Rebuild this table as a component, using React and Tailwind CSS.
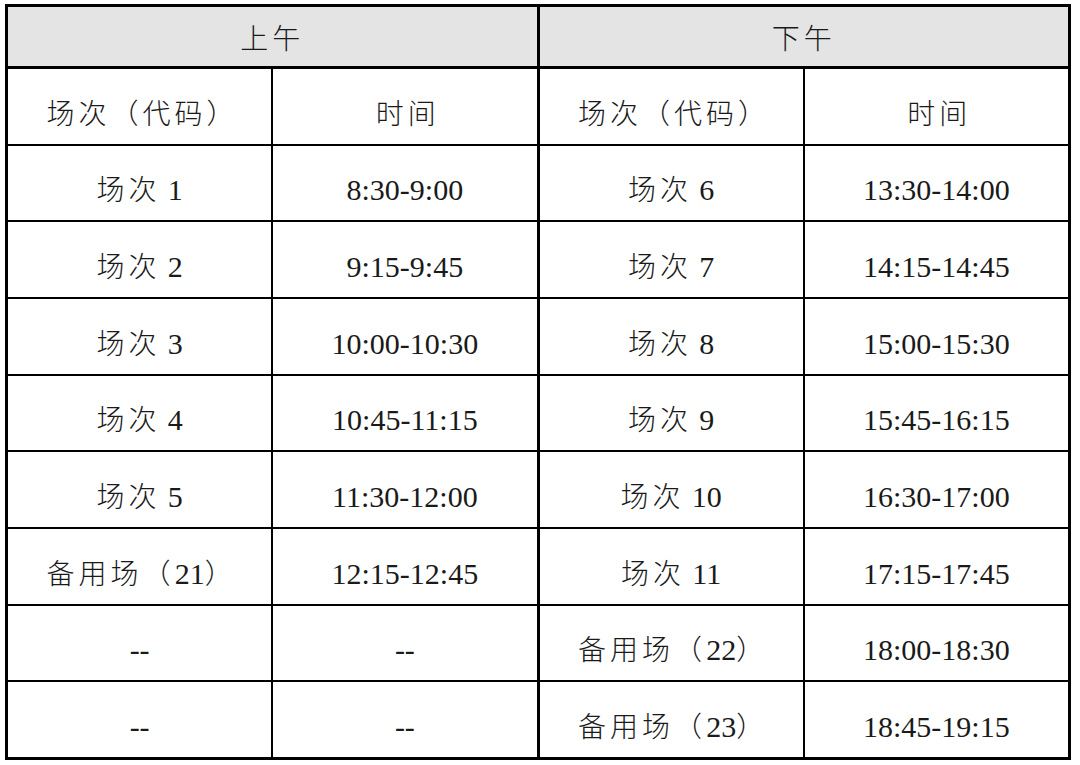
import React from 'react';

const cjk = "font-['Noto_Sans_CJK_SC','Liberation_Serif',serif] font-light";
const latin = "font-['Liberation_Serif','Noto_Sans_CJK_SC',serif] text-[30px]";

const rows = [
  ['场次', '1', '8:30-9:00', '场次', '6', '13:30-14:00'],
  ['场次', '2', '9:15-9:45', '场次', '7', '14:15-14:45'],
  ['场次', '3', '10:00-10:30', '场次', '8', '15:00-15:30'],
  ['场次', '4', '10:45-11:15', '场次', '9', '15:45-16:15'],
  ['场次', '5', '11:30-12:00', '场次', '10', '16:30-17:00'],
  ['备用场', '21', '12:15-12:45', '场次', '11', '17:15-17:45'],
  [null, null, '--', '备用场', '22', '18:00-18:30'],
  [null, null, '--', '备用场', '23', '18:45-19:15'],
];

const Session = ({ label, num }) => {
  if (label === null) return <span className={latin}>--</span>;
  if (label === '备用场') {
    return (
      <span>
        <span className={`${cjk} tracking-[4px]`}>备用场（</span>
        <span className={latin}>{num}</span>
        <span className={cjk}>）</span>
      </span>
    );
  }
  return (
    <span>
      <span className={`${cjk} tracking-[4px]`}>{label}</span>{' '}
      <span className={latin}>{num}</span>
    </span>
  );
};

const App = () => {
  return (
    <div className="h-[765px] w-[1080px] bg-white pl-[5px] pt-[4px]">
      <table className="w-[1066px] table-fixed border-collapse border-[3px] border-black text-[28px] text-[#1a1a1a]">
        <thead>
          <tr className="h-[62px] bg-[#e4e4e4]">
            <th colSpan={2} className={`border-b-[3px] border-r-[3px] border-black ${cjk}`}>
              <span className="tracking-[4px]">上午</span>
            </th>
            <th colSpan={2} className={`border-b-[3px] border-black ${cjk}`}>
              <span className="tracking-[4px]">下午</span>
            </th>
          </tr>
        </thead>
        <tbody>
          <tr className="h-[77px]">
            <td className={`w-1/4 border-[2px] border-black pt-[12px] pl-[6px] text-center tracking-[4px] ${cjk}`}>场次（代码）</td>
            <td className={`w-1/4 border-[2px] border-r-[3px] border-black pt-[12px] pl-[6px] text-center tracking-[4px] ${cjk}`}>时间</td>
            <td className={`w-1/4 border-[2px] border-black pt-[12px] pl-[6px] text-center tracking-[4px] ${cjk}`}>场次（代码）</td>
            <td className={`w-1/4 border-[2px] border-black pt-[12px] pl-[6px] text-center tracking-[4px] ${cjk}`}>时间</td>
          </tr>
          {rows.map((r, i) => (
            <tr key={i} className="h-[76.7px]">
              <td className="border-[2px] border-black pt-[14px] text-center">
                <Session label={r[0]} num={r[1]} />
              </td>
              <td className={`border-[2px] border-r-[3px] border-black pt-[14px] text-center ${latin}`}>{r[2]}</td>
              <td className="border-[2px] border-black pt-[14px] text-center">
                <Session label={r[3]} num={r[4]} />
              </td>
              <td className={`border-[2px] border-black pt-[14px] text-center ${latin}`}>{r[5]}</td>
            </tr>
          ))}
        </tbody>
      </table>
    </div>
  );
};

export default App;
